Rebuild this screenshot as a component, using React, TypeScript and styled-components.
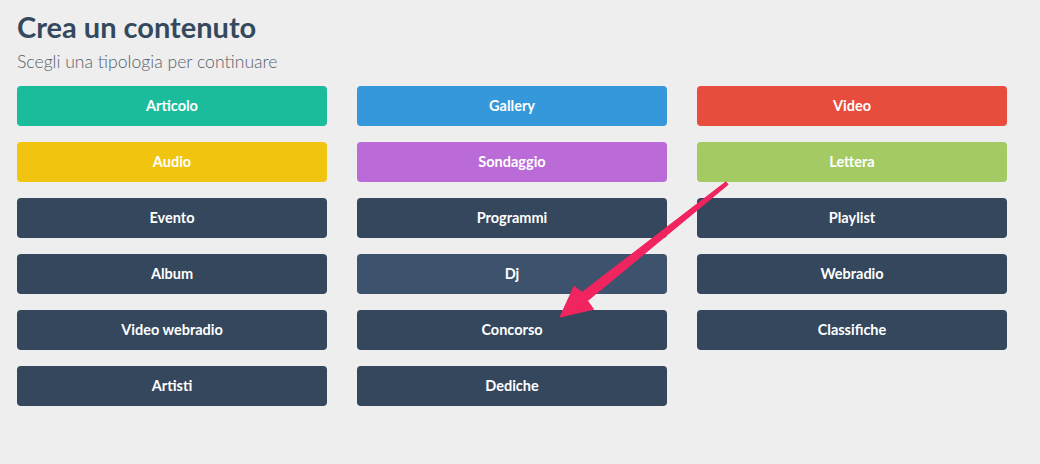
import styled, { createGlobalStyle } from "styled-components";

const GlobalStyle = createGlobalStyle`
  html, body {
    margin: 0;
    padding: 0;
    background: #eeeeee;
  }
  body {
    font-family: Lato, "Open Sans", sans-serif;
    width: 1040px;
    height: 464px;
    overflow: hidden;
  }
`;

type ContentType = {
  label: string;
  color: string;
};

const types: ContentType[] = [
  { label: "Articolo", color: "#1abc9c" },
  { label: "Gallery", color: "#3498db" },
  { label: "Video", color: "#e74c3c" },
  { label: "Audio", color: "#f1c40f" },
  { label: "Sondaggio", color: "#ba6bd8" },
  { label: "Lettera", color: "#a4ca63" },
  { label: "Evento", color: "#34475c" },
  { label: "Programmi", color: "#34475c" },
  { label: "Playlist", color: "#34475c" },
  { label: "Album", color: "#34475c" },
  { label: "Dj", color: "#3d536d" },
  { label: "Webradio", color: "#34475c" },
  { label: "Video webradio", color: "#34475c" },
  { label: "Concorso", color: "#34475c" },
  { label: "Classifiche", color: "#34475c" },
  { label: "Artisti", color: "#34475c" },
  { label: "Dediche", color: "#34475c" },
];

const App = () => {
  return (
    <>
      <GlobalStyle />
      <Page>
        <Title>Crea un contenuto</Title>
        <Subtitle>Scegli una tipologia per continuare</Subtitle>
        <TypeGrid>
          {types.map((t) => (
            <TypeButton key={t.label} $bg={t.color} type="button">
              {t.label}
            </TypeButton>
          ))}
        </TypeGrid>
        {/* annotation arrow pointing at "Concorso" */}
        <Arrow width="1040" height="464" viewBox="0 0 1040 464">
          <polygon
            points="725.9,181.8 582.2,292.2 574.0,286.4 560,317 593.5,309.3 587.5,300.8 728.1,184.6"
            fill="#f0245f"
            stroke="#f0245f"
            strokeWidth="1"
            strokeLinejoin="round"
          />
        </Arrow>
      </Page>
    </>
  );
};

const Page = styled.div`
  position: relative;
  width: 1040px;
  height: 464px;
  padding: 9px 0 0 17px;
  box-sizing: border-box;
`;

const Title = styled.h1`
  margin: 0;
  font-size: 29px;
  line-height: 36px;
  font-weight: 700;
  color: #34495e;
`;

const Subtitle = styled.p`
  margin: 6px 0 0;
  font-size: 17.6px;
  line-height: 22px;
  font-weight: 300;
  color: #56616c;
`;

const TypeGrid = styled.div`
  display: grid;
  grid-template-columns: repeat(3, 310px);
  column-gap: 30px;
  row-gap: 16px;
  margin-top: 13px;
`;

const TypeButton = styled.button<{ $bg: string }>`
  height: 40px;
  border: none;
  border-radius: 4px;
  background: ${(p) => p.$bg};
  color: #ffffff;
  font-family: Lato, "Open Sans", sans-serif;
  font-size: 14.5px;
  font-weight: 700;
  padding: 0 0 1px;
  cursor: pointer;
`;

const Arrow = styled.svg`
  position: absolute;
  top: 0;
  left: 0;
  pointer-events: none;
`;

export default App;
